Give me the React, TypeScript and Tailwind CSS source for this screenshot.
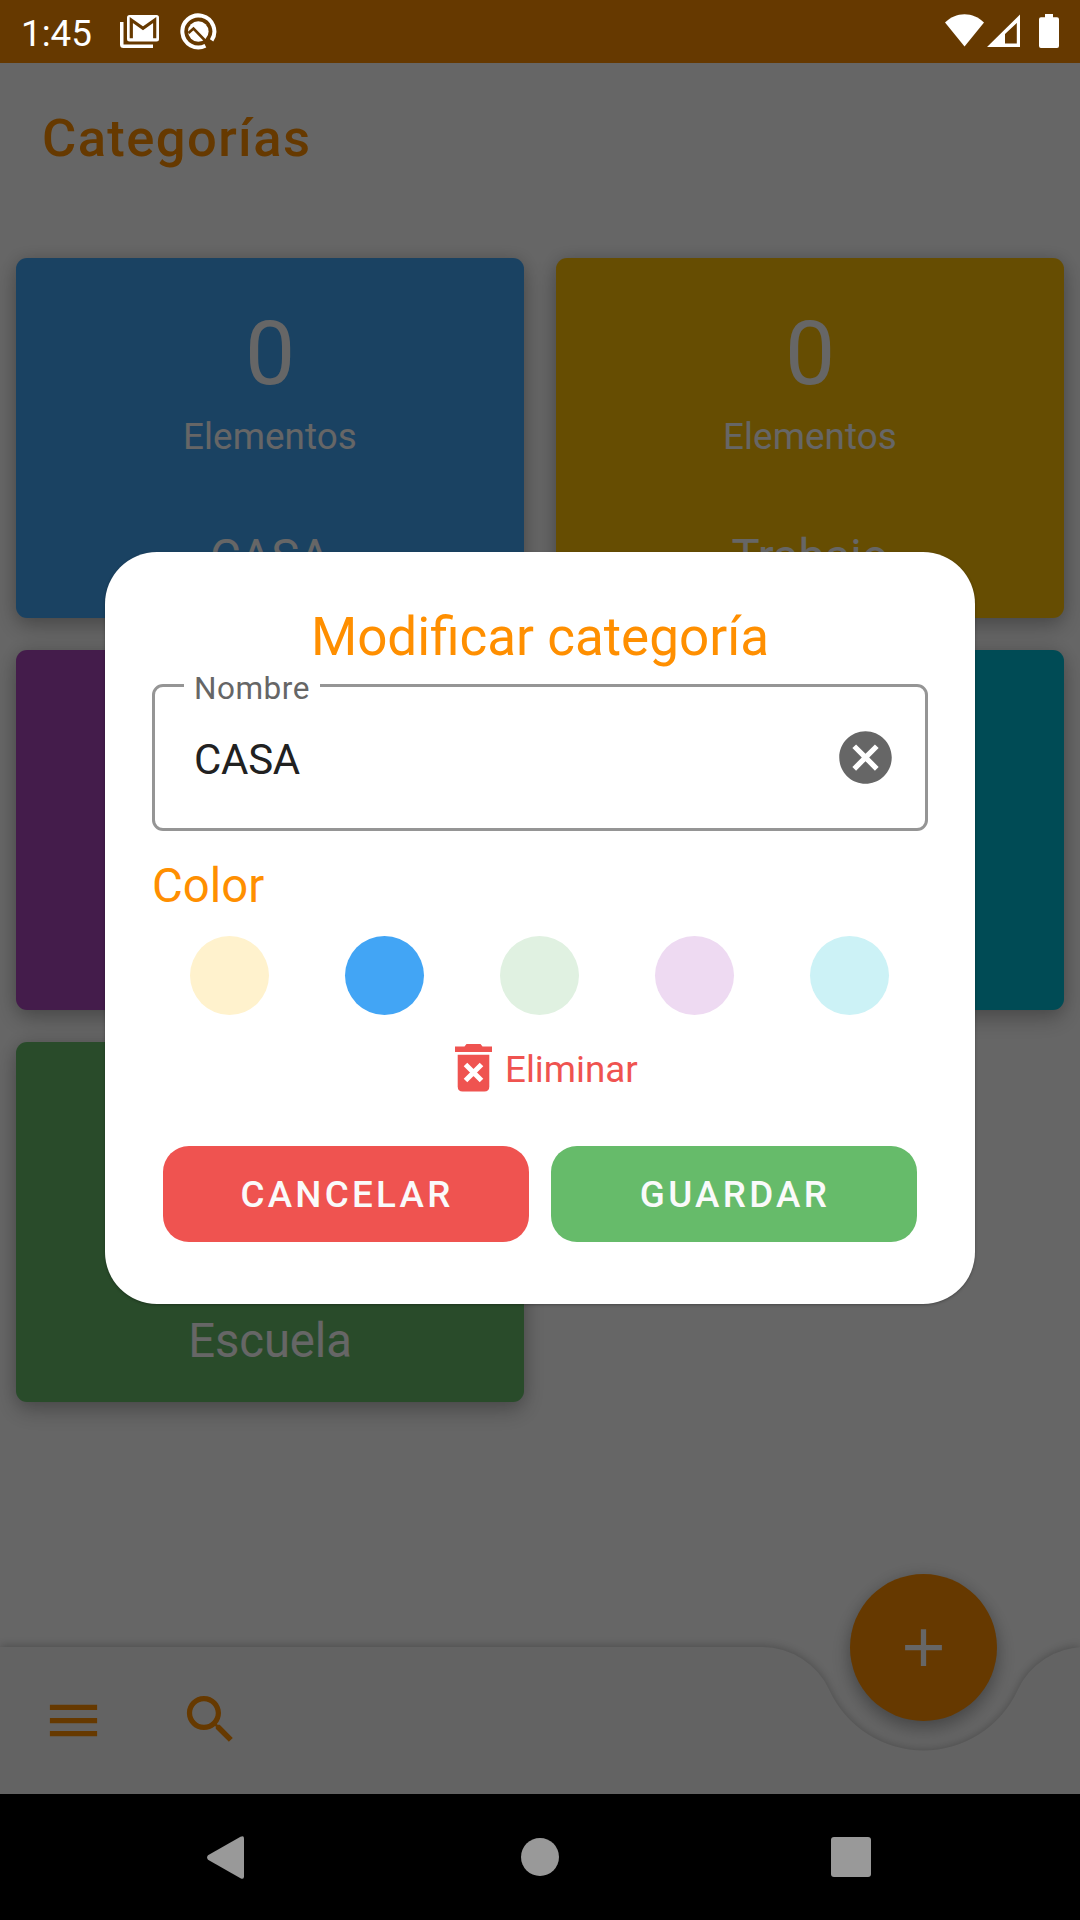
import React from "react";

type Category = { id: string; color: string; name?: string; count?: number };

const categories: Category[] = [
  { id: "casa", name: "CASA", count: 0, color: "bg-[#42a5f5]" },
  { id: "trabajo", name: "Trabajo", count: 0, color: "bg-[#ffc107]" },
  { id: "purple", color: "bg-[#ab47bc]" },
  { id: "teal", color: "bg-[#00bcd4]" },
  { id: "escuela", name: "Escuela", color: "bg-[#66bb6a]" },
];

const swatches = ["bg-[#fff2cd]", "bg-[#42a5f5]", "bg-[#e0f1e1]", "bg-[#eedaf2]", "bg-[#ccf2f6]"];

function StatusBar() {
  return (
    <div className="relative z-20 flex h-[63px] items-start bg-[#663900] text-white">
      <span className="ml-[21px] mt-[12px] w-[75px] text-[36.75px] leading-[43px]">1:45</span>
      <svg className="ml-[24px] mt-[15px]" width="39" height="33" viewBox="0 0 39 33" fill="none">
        <path d="M1.75 7V29.5a1.75 1.75 0 0 0 1.75 1.75H33" stroke="white" strokeWidth="3.5" />
        <rect x="7" y="0" width="32" height="26.6" rx="2.5" fill="white" />
        <path d="M11.3 23.2V5L23 13.2L34.7 5V23.2" stroke="#663900" strokeWidth="3.2" />
      </svg>
      <svg className="ml-[21px] mt-[13px]" width="37" height="37" viewBox="0 0 37 37" fill="none">
        <path d="M25.4 32.8A16 16 0 1 1 31.6 27.4" stroke="white" strokeWidth="4" />
        <circle cx="18.3" cy="18.5" r="10.3" fill="white" />
        <path d="M8.5 20L13.500 15.500L27.500 30" stroke="#663900" strokeWidth="2.6" />
      </svg>
      <svg className="ml-auto mt-[14px]" width="39" height="33" viewBox="0 0 39 33">
        <path d="M0 8.6C5.4 3.2 12 .2 19.5.2S33.600 3.200 39 8.600L19.500 32.500Z" fill="white" />
      </svg>
      <svg className="ml-[3px] mt-[14px]" width="33" height="33" viewBox="0 0 33 33">
        <path d="M0 33L33 .5V33ZM18 29.500H29.800V9L18 20Z" fill="white" fillRule="evenodd" />
      </svg>
      <svg className="ml-[19px] mr-[21px] mt-[14px]" width="20" height="34" viewBox="0 0 20 34">
        <path d="M6 0H14V3.300H18Q20 3.300 20 5.300V32Q20 34 18 34H2Q0 34 0 32V5.300Q0 3.300 2 3.300H6Z" fill="white" />
      </svg>
    </div>
  );
}

function CategoryCard({ category }: { category: Category }) {
  return (
    <div
      className={`flex h-[360px] flex-col items-center rounded-[11px] pb-[33px] pt-[43px] text-white shadow-[0_9px_22px_rgba(0,0,0,0.24),0_0_16px_rgba(0,0,0,0.12)] ${category.color}`}
    >
      {category.count !== undefined && (
        <>
          <span className="text-[89.25px] leading-[105px]">{category.count}</span>
          <span className="mt-[9px] text-[36.75px] leading-[43px] tracking-[0.1px]">Elementos</span>
        </>
      )}
      {category.name && <span className="mt-auto text-[47.25px] leading-[56px] tracking-[-0.1px]">{category.name}</span>}
    </div>
  );
}

function BottomBar() {
  return (
    <div className="relative flex h-[147px] items-start">
      <svg
        className="absolute inset-x-0 bottom-0 drop-shadow-[0_-1px_5px_rgba(0,0,0,0.26)]"
        width="1080"
        height="147"
        viewBox="0 0 1080 147"
      >
        <path
          d="M-20 0H762A74 74 0 0 1 829.300 43A103.600 103.600 0 0 0 1017.700 43A74 74 0 0 1 1085 0H1100V147H-20Z"
          fill="#f8f8f8"
        />
      </svg>
      <svg className="relative ml-[42px] mt-[42px]" width="63" height="63" viewBox="0 0 24 24" fill="#ff8f00">
        <path d="M3 18h18v-2H3v2zm0-5h18v-2H3v2zm0-7v2h18V6H3z" />
      </svg>
      <svg className="relative ml-[74px] mt-[41px]" width="63" height="63" viewBox="0 0 24 24" fill="#ff8f00">
        <path d="M15.5 14h-.79l-.28-.27C15.410 12.590 16 11.110 16 9.500 16 5.910 13.090 3 9.500 3S3 5.910 3 9.500 5.910 16 9.500 16c1.610 0 3.090-.59 4.230-1.570l.27.28v.79l5 4.990L20.490 19l-4.990-5zm-6 0C7.010 14 5 11.990 5 9.500S7.010 5 9.500 5 14 7.010 14 9.500 11.990 14 9.500 14z" />
      </svg>
      <button className="absolute left-[850px] top-[-73px] flex h-[147px] w-[147px] items-center justify-center rounded-full bg-[#ff8f00] shadow-[0_9px_20px_rgba(0,0,0,0.28),0_0_14px_rgba(0,0,0,0.1)]">
        <svg width="63" height="63" viewBox="0 0 24 24" fill="white">
          <path d="M19 13h-6v6h-2v-6H5v-2h6V5h2v6h6v2z" />
        </svg>
      </button>
    </div>
  );
}

function NavigationBar() {
  return (
    <div className="relative z-20 flex h-[126px] items-center bg-black pl-[207px]">
      <svg width="37" height="43" viewBox="0 0 37 43" fill="#999999">
        <path d="M1 19.300L33.500 .8Q37 -.8 37 2.500V40.500Q37 43.800 33.500 42.200L1 23.700Q-.8 21.500 1 19.300Z" />
      </svg>
      <div className="ml-[277px] size-[38px] rounded-full bg-[#999999]" />
      <div className="ml-[272px] size-[40px] rounded-[3px] bg-[#999999]" />
    </div>
  );
}

function NameField() {
  return (
    <div className="relative mt-[16px] flex h-[147px] items-center justify-between rounded-[11px] border-[3px] border-[#959595] pl-[39px] pr-[28px]">
      <span className="absolute left-[29px] top-[-17px] h-[37px] w-[136px] bg-white pl-[10px] text-[31.5px] leading-[38px] tracking-[0.5px] text-[#666666]">
        Nombre
      </span>
      <span className="mt-[4px] text-[42px] leading-[49px] tracking-[-0.3px] text-[#212121]">CASA</span>
      <svg width="63" height="63" viewBox="0 0 24 24" fill="#666666">
        <path d="M12 2C6.470 2 2 6.470 2 12s4.470 10 10 10 10-4.470 10-10S17.530 2 12 2zm5 13.590L15.590 17 12 13.410 8.410 17 7 15.590 10.590 12 7 8.410 8.410 7 12 10.590 15.590 7 17 8.410 13.410 12 17 15.590z" />
      </svg>
    </div>
  );
}

function EditDialog() {
  return (
    <div className="absolute left-[105px] top-[552px] z-30 flex h-[752px] w-[870px] flex-col rounded-[52px] bg-white px-[47px] pt-[55px] shadow-[0_1px_3px_rgba(0,0,0,0.3)]">
      <h2 className="text-center text-[53px] leading-[61px] text-[#ff8f00]">Modificar categoría</h2>
      <NameField />
      <div className="mt-[27px] text-[47.25px] leading-[56px] text-[#ff8f00]">Color</div>
      <div className="mt-[22px] flex justify-between pl-[38px] pr-[39px]">
        {swatches.map((swatch) => (
          <div key={swatch} className={`size-[79px] rounded-full ${swatch}`} />
        ))}
      </div>
      <div className="mt-[29px] flex h-[48px] items-start pl-[303px] text-[#ef5350]">
        <svg width="37" height="48" viewBox="0 0 37 48" fill="none">
          <path d="M0 2.500H9.500L11.500 0H25.500L27.500 2.500H37V7.900H0Z" fill="currentColor" />
          <path d="M2.700 10.700H34.300V42.500Q34.300 47.500 29.300 47.500H7.700Q2.700 47.500 2.700 42.500Z" fill="currentColor" />
          <path d="M10.500 20.500L26.500 36.500M26.500 20.500L10.500 36.500" stroke="white" strokeWidth="5" />
        </svg>
        <span className="ml-[13px] mt-[4px] text-[36.75px] leading-[43px]">Eliminar</span>
      </div>
      <div className="mt-[54px] flex gap-[22px] px-[11px] text-[36.75px] font-medium tracking-[3.28px] text-[#fafafa]">
        <button className="h-[96px] flex-1 rounded-[26px] bg-[#ef5350] pl-[2px] pt-[2px]">CANCELAR</button>
        <button className="h-[96px] flex-1 rounded-[26px] bg-[#66bb6a] pl-[2px] pt-[2px]">GUARDAR</button>
      </div>
    </div>
  );
}

export default function App() {
  return (
    <div className="relative flex h-[1920px] w-[1080px] flex-col overflow-hidden bg-white font-['Roboto',sans-serif]">
      <StatusBar />
      <header className="mt-[44px] pl-[42px]">
        <h1 className="text-[52.5px] font-medium leading-[62px] tracking-[1.4px] text-[#ff8f00]">Categorías</h1>
      </header>
      <main className="mt-[89px] grid grid-cols-2 content-start gap-[32px] px-[16px]">
        {categories.map((category) => (
          <CategoryCard key={category.id} category={category} />
        ))}
      </main>
      <div className="mt-auto">
        <BottomBar />
        <NavigationBar />
      </div>
      <div className="absolute inset-0 z-10 bg-black/60" />
      <EditDialog />
    </div>
  );
}
